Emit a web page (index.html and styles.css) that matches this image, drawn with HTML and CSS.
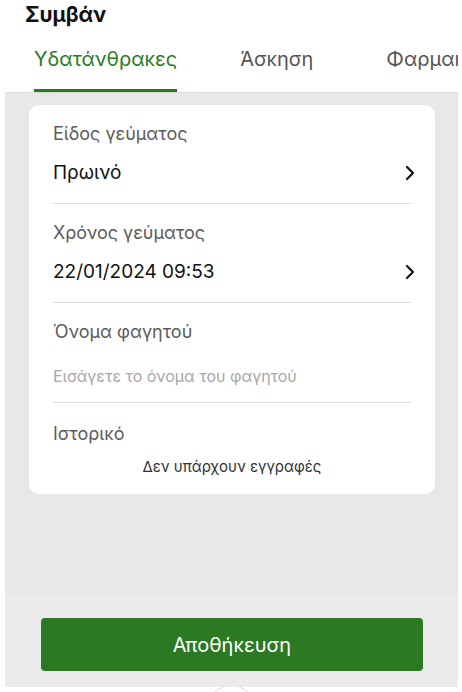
FILE: index.html
```html
<!DOCTYPE html>
<html lang="el">
<head>
    <meta charset="UTF-8">
    <meta name="viewport" content="width=device-width, initial-scale=1.0">
    <title>Συμβάν</title>
    <link rel="stylesheet" href="styles.css">
</head>
<body>
    <div class="screen">
        <h1 class="title">Συμβάν</h1>

        <nav class="tabs">
            <span class="tab active">Υδατάνθρακες</span>
            <span class="tab">Άσκηση</span>
            <span class="tab">Φαρμακα</span>
        </nav>

        <main class="content">
            <div class="card">
                <div class="field">
                    <div class="label">Είδος γεύματος</div>
                    <div class="value-row">
                        <span class="value">Πρωινό</span>
                        <svg class="chevron" width="10" height="16" viewBox="0 0 10 16"><path d="M2 2 L8 8 L2 14" fill="none" stroke="#111" stroke-width="2.2" stroke-linecap="round" stroke-linejoin="round"/></svg>
                    </div>
                </div>
                <div class="field">
                    <div class="label">Χρόνος γεύματος</div>
                    <div class="value-row">
                        <span class="value">22/01/2024 09:53</span>
                        <svg class="chevron" width="10" height="16" viewBox="0 0 10 16"><path d="M2 2 L8 8 L2 14" fill="none" stroke="#111" stroke-width="2.2" stroke-linecap="round" stroke-linejoin="round"/></svg>
                    </div>
                </div>
                <div class="field input">
                    <div class="label">Όνομα φαγητού</div>
                    <div class="value-row">
                        <span class="placeholder">Εισάγετε το όνομα του φαγητού</span>
                    </div>
                </div>
                <div class="field last">
                    <div class="label">Ιστορικό</div>
                    <div class="empty">Δεν υπάρχουν εγγραφές</div>
                </div>
            </div>
        </main>

        <footer class="bottom-bar">
            <button class="save-btn">Αποθήκευση</button>
        </footer>

        <div class="fab-slot">
            <div class="fab"></div>
        </div>
    </div>
</body>
</html>
```

FILE: styles.css
```css
html, body {
    margin: 0;
    height: 692px;
    overflow: hidden;
    background: #fff;
}
body {
    font-family: Inter, "Noto Sans", sans-serif;
    color: #111;
}
.screen {
    display: flex;
    flex-direction: column;
}
.title {
    margin: 0;
    padding: 3px 0 0 25px;
    font-size: 21px;
    line-height: 24px;
    font-weight: 700;
}
.tabs {
    display: flex;
    gap: 63px;
    margin: 20px 4px 0 0;
    padding-left: 34px;
    white-space: nowrap;
    overflow: hidden;
}
.tab {
    font-size: 20px;
    line-height: 24px;
    color: #555;
    padding-bottom: 18px;
    border-bottom: 3px solid transparent;
}
.tab:last-child {
    margin-left: 10px;
}
.tab.active {
    color: #2b7a23;
    border-bottom-color: #2b7a23;
}
.content {
    margin: 0 4px 0 5px;
    height: 489px;
    padding-top: 12px;
    background: #e8e8e8;
    border-top: 1px solid #dadada;
}
.card {
    margin: 0 23px 0 24px;
    background: #fff;
    border-radius: 10px;
    padding: 0 24px;
}
.field {
    padding: 17px 0 18px;
    border-bottom: 1px solid #dedede;
}
.field.input {
    padding-bottom: 14px;
}
.field.input .value-row {
    margin-top: 20px;
}
.field.last {
    border-bottom: none;
    padding: 19px 0 17px;
}
.label {
    font-size: 18px;
    line-height: 24px;
    color: #5c5c5c;
}
.value-row {
    display: flex;
    align-items: center;
    justify-content: space-between;
    margin-top: 15px;
    height: 24px;
}
.value {
    font-size: 19px;
    line-height: 24px;
    color: #111;
}
.chevron {
    margin-right: -4px;
}
.placeholder {
    font-size: 16px;
    color: #a8a8a8;
}
.empty {
    margin-top: 11px;
    text-align: center;
    font-size: 15px;
    line-height: 20px;
    color: #333;
}
.bottom-bar {
    margin: 0 4px 0 5px;
    padding: 24px 35px 16px 36px;
    background: #ebebeb;
}
.save-btn {
    display: block;
    width: 100%;
    height: 53px;
    border: none;
    border-radius: 4px;
    background: #2b7a23;
    color: #fff;
    font-family: Inter, "Noto Sans", sans-serif;
    font-size: 20px;
}
.fab-slot {
    height: 5px;
    overflow: hidden;
    display: flex;
    justify-content: center;
}
.fab {
    flex: none;
    width: 48px;
    height: 48px;
    margin-top: -2px;
    border: 1px solid #dcdcdc;
    border-radius: 50%;
    background: #fff;
}
```
